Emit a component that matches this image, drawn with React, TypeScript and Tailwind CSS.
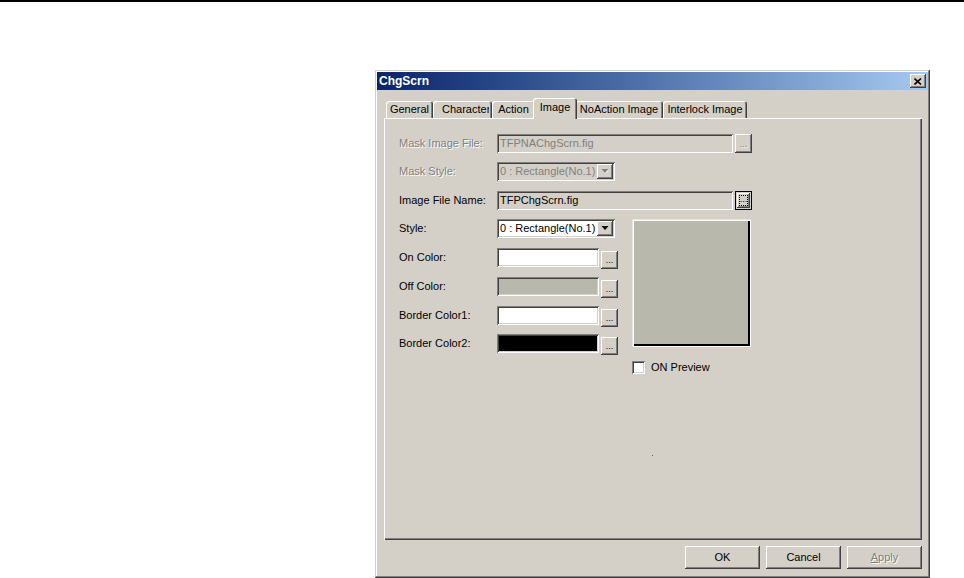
import React from 'react';

const raised =
  'shadow-[inset_-1px_-1px_0_#404040,inset_1px_1px_0_#fff,inset_-2px_-2px_0_#808080,inset_2px_2px_0_#d4d0c8]';
const sunken =
  'shadow-[inset_1px_1px_0_#808080,inset_-1px_-1px_0_#fff,inset_2px_2px_0_#404040,inset_-2px_-2px_0_#d4d0c8]';
const greyText = 'text-[#808080] [text-shadow:1px_1px_0_#fff]';

const Label: React.FC<{ children: React.ReactNode; disabled?: boolean }> = ({ children, disabled }) => (
  <div className={`w-[98px] shrink-0 text-[11px] leading-[19px] ${disabled ? greyText : 'text-black'}`}>{children}</div>
);

const DotsButton: React.FC<{ disabled?: boolean; focused?: boolean; className?: string }> = ({
  disabled,
  focused,
  className = '',
}) => {
  if (focused) {
    return (
      <div className={`w-[17px] h-[19px] bg-[#d4d0c8] border border-black p-[1px] ${className}`}>
        <div className={`w-full h-full ${raised} p-[2px]`}>
          <div className="w-full h-full border border-dotted border-black flex items-end justify-center text-[9px] leading-[9px] pb-[1px]">
            ...
          </div>
        </div>
      </div>
    );
  }
  return (
    <div
      className={`w-[17px] h-[19px] bg-[#d4d0c8] ${raised} flex items-end justify-center text-[9px] leading-[9px] pb-[4px] ${
        disabled ? greyText : 'text-black'
      } ${className}`}
    >
      ...
    </div>
  );
};

const Arrow: React.FC<{ disabled?: boolean }> = ({ disabled }) => (
  <svg width="8" height="5" viewBox="0 0 8 5">
    {disabled && <path d="M1.5 1 L8 1 L4.5 4.5 Z" fill="#fff" />}
    <path d="M0.5 0 L7.5 0 L4 4 Z" fill={disabled ? '#808080' : '#000'} />
  </svg>
);

const Combo: React.FC<{ value: string; disabled?: boolean }> = ({ value, disabled }) => (
  <div className={`w-[118px] h-[19px] ${sunken} ${disabled ? 'bg-[#d4d0c8]' : 'bg-white'} flex items-center p-[2px]`}>
    <div className={`flex-1 pl-[1px] text-[11px] leading-[15px] whitespace-nowrap overflow-hidden ${disabled ? 'text-[#808080]' : 'text-black'}`}>
      {value}
    </div>
    <div className={`w-[16px] h-[15px] bg-[#d4d0c8] ${raised} flex items-center justify-center`}>
      <Arrow disabled={disabled} />
    </div>
  </div>
);

const FileRow: React.FC<{ label: string; value: string; disabled?: boolean; focused?: boolean; className?: string }> = ({
  label,
  value,
  disabled,
  focused,
  className = '',
}) => (
  <div className={`flex items-center h-[19px] ${className}`}>
    <Label disabled={disabled}>{label}</Label>
    <div
      className={`w-[236px] h-[19px] bg-[#d4d0c8] ${sunken} pl-[3px] text-[11px] leading-[19px] ${
        disabled ? 'text-[#808080]' : 'text-black'
      }`}
    >
      {value}
    </div>
    <DotsButton disabled={disabled} focused={focused} className="ml-[2px]" />
  </div>
);

const ColorRow: React.FC<{ label: string; color: string; className?: string }> = ({ label, color, className = '' }) => (
  <div className={`flex items-start h-[19px] ${className}`}>
    <Label>{label}</Label>
    <div className={`w-[102px] h-[19px] ${sunken} ${color}`} />
    <DotsButton className="ml-[2px] mt-[3px] !h-[18px]" />
  </div>
);

const tabBase =
  'h-[17px] bg-[#d4d0c8] rounded-t-[3px] shadow-[inset_1px_1px_0_#fff,inset_-1px_0_0_#404040,inset_-2px_0_0_#808080] text-[11px] leading-[17px] text-black whitespace-nowrap overflow-hidden';

const DialogButton: React.FC<{ children: React.ReactNode; disabled?: boolean }> = ({ children, disabled }) => (
  <div
    className={`w-[75px] h-[23px] bg-[#d4d0c8] ${raised} flex items-center justify-center text-[11px] ${
      disabled ? greyText : 'text-black'
    }`}
  >
    {children}
  </div>
);

export default function App() {
  return (
    <div className="w-[964px] h-[578px] bg-white overflow-hidden font-['Liberation_Sans',Arial,sans-serif]">
      <div className="h-[2px] bg-black" />

      <div
        className={`ml-[375px] mt-[68px] w-[555px] h-[508px] bg-[#d4d0c8] p-[2px] flex flex-col shadow-[inset_-1px_-1px_0_#404040,inset_1px_1px_0_#d4d0c8,inset_-2px_-2px_0_#808080,inset_2px_2px_0_#fff]`}
      >
        {/* title bar */}
        <div className="h-[18px] bg-gradient-to-r from-[#0a246a] to-[#a6caf0] flex items-center justify-between pl-[2px] pr-[2px]">
          <span className="text-white font-bold text-[12px] leading-[18px]">ChgScrn</span>
          <div className={`w-[16px] h-[14px] bg-[#d4d0c8] ${raised} flex items-center justify-center`}>
            <svg width="8" height="7" viewBox="0 0 8 7">
              <path d="M0.5 0.5 L7 6.5 M7 0.5 L0.5 6.5" stroke="#000" strokeWidth="1.6" />
            </svg>
          </div>
        </div>

        {/* tabs */}
        <div className="mt-[8px] ml-[9px] h-[20px] flex items-end">
          <div className={`${tabBase} w-[47px] text-center`}>General</div>
          <div className={`${tabBase} w-[59px] pl-[9px]`}>
            <span className="inline-block w-[47px] overflow-hidden align-top">Character</span>
          </div>
          <div className={`${tabBase} w-[43px] text-center`}>Action</div>
          <div className="relative z-10 -mx-[2px] -mb-[1px] w-[44px] h-[21px] bg-[#d4d0c8] rounded-t-[3px] shadow-[inset_1px_1px_0_#fff,inset_-1px_0_0_#404040,inset_-2px_0_0_#808080] text-[11px] leading-[18px] text-center text-black">
            Image
          </div>
          <div className={`${tabBase} w-[88px] text-center`}>NoAction Image</div>
          <div className={`${tabBase} w-[84px] text-center`}>Interlock Image</div>
        </div>

        {/* tab panel */}
        <div className="relative ml-[7px] w-[538px] h-[422px] shadow-[inset_1px_1px_0_#fff,inset_-1px_-1px_0_#404040,inset_-2px_-2px_0_#808080] pl-[15px] pt-[16px]">
          <FileRow label="Mask Image File:" value="TFPNAChgScrn.fig" disabled />

          <div className="flex items-center h-[19px] mt-[9px]">
            <Label disabled>Mask Style:</Label>
            <Combo value="0 : Rectangle(No.1)" disabled />
          </div>

          <FileRow label="Image File Name:" value="TFPChgScrn.fig" focused className="mt-[10px]" />

          <div className="flex mt-[9px]">
            <div className="w-[219px] flex flex-col">
              <div className="flex items-center h-[19px]">
                <Label>Style:</Label>
                <Combo value="0 : Rectangle(No.1)" />
              </div>
              <ColorRow label="On Color:" color="bg-white" className="mt-[10px]" />
              <ColorRow label="Off Color:" color="bg-[#b8b8ac]" className="mt-[10px]" />
              <ColorRow label="Border Color1:" color="bg-white" className="mt-[10px]" />
              <ColorRow label="Border Color2:" color="bg-black" className="mt-[9px]" />
            </div>

            <div className="ml-[14px] flex flex-col">
              <div className="w-[119px] h-[128px] bg-[#b8b8ac] shadow-[inset_1px_1px_0_#e4e4e4,inset_2px_2px_0_#fff,inset_-1px_-1px_0_#fff,inset_-3px_-3px_0_#000]" />
              <div className="flex items-center mt-[14px] h-[13px]">
                <div className={`w-[13px] h-[13px] bg-white ${sunken}`} />
                <span className="ml-[6px] text-[11px] leading-[13px] text-black">ON Preview</span>
              </div>
            </div>
          </div>

          <div className="absolute left-[268px] top-[337px] w-[1px] h-[1px] bg-[#606060]" />
        </div>

        {/* buttons */}
        <div className="ml-[7px] w-[538px] mt-[6px] flex justify-end gap-[6px]">
          <DialogButton>OK</DialogButton>
          <DialogButton>Cancel</DialogButton>
          <DialogButton disabled>
            <span className="underline">A</span>pply
          </DialogButton>
        </div>
      </div>
    </div>
  );
}
